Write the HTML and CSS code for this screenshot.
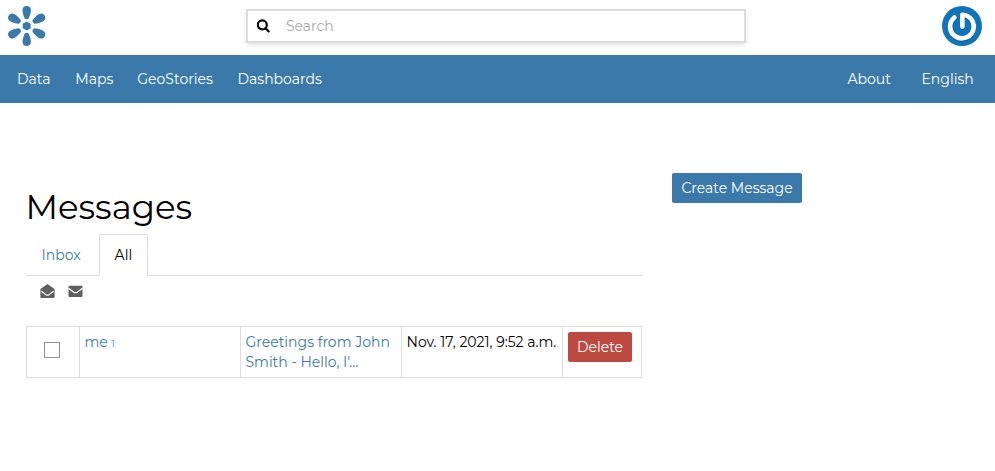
FILE: index.html
```html
<!DOCTYPE html>
<html lang="en">
<head>
<meta charset="utf-8">
<title>Messages</title>
<link rel="stylesheet" href="styles.css">
</head>
<body>
<header class="top">
  <svg class="logo" viewBox="-19.7 -20 40 40" width="40" height="40" aria-hidden="true">
    <defs><path id="petal" d="M-2-7.5C-3-9.8-4.2-13-4.2-16C-4.2-18.5-2.4-20 0-20S4.2-18.5 4.2-16C4.2-13 3-9.8 2-7.5Q0-5.9-2-7.5Z"/></defs>
    <use href="#petal"/><use href="#petal" transform="rotate(60) scale(1 1.04)"/><use href="#petal" transform="rotate(120) scale(1 1.04)"/>
    <use href="#petal" transform="rotate(180)"/><use href="#petal" transform="rotate(240) scale(1 1.04)"/><use href="#petal" transform="rotate(300) scale(1 1.04)"/>
    <path d="M0-4.4L4-2.2V2.2L0 4.4L-4 2.2V-2.2Z"/>
  </svg>
  <form class="search">
    <svg viewBox="0 0 14 14" width="14" height="14" aria-hidden="true"><circle cx="5.3" cy="5.9" r="4.5"/><path d="M8.6 9.2L11.7 12.4"/></svg>
    <input type="text" placeholder="Search" aria-label="Search">
  </form>
  <svg class="avatar" viewBox="-20 -20 40 40" width="40" height="40" aria-hidden="true">
    <circle r="20"/>
    <path class="shade" d="M.8 2V-10A11.8 11.8 0 1 1-7.1-7.7"/>
    <path d="M.4 .6V-11.3A11.8 11.8 0 1 1-7.6-8.6"/>
  </svg>
</header>
<nav class="bar">
  <a class="data">Data</a><a class="maps">Maps</a><a class="stories">GeoStories</a><a class="dash">Dashboards</a>
  <a class="about">About</a><a class="lang">English</a>
</nav>
<main class="page">
  <section class="main">
    <h1>Messages</h1>
    <div class="tabs"><a class="tab inbox">Inbox</a><a class="tab active">All</a></div>
    <div class="actions">
      <svg viewBox="0 0 15 15" width="15" height="15" aria-hidden="true"><path d="M7.5 0L14.6 5V13Q14.6 14 13.6 14H1.4Q.4 14 .4 13V5Z"/><path class="line" d="M1.4 7.3L6 10.7Q7.5 11.7 9 10.7L13.6 7.3"/></svg>
      <svg viewBox="0 0 15 15" width="15" height="15" aria-hidden="true"><path d="M1.5 1.8H13.5Q14.5 1.8 14.5 2.8V12Q14.5 13 13.5 13H1.5Q.5 13 .5 12V2.8Q.5 1.8 1.5 1.8Z"/><path class="line" d="M.5 4.3L5.8 8.2Q7.5 9.2 9.2 8.2L14.5 4.3"/></svg>
    </div>
    <table>
      <tr>
        <td class="c1"><span class="check"></span></td>
        <td class="c2"><a>me <small>1</small></a></td>
        <td class="c3"><a>Greetings from John<br>Smith - Hello, I'...</a></td>
        <td class="c4">Nov. 17, 2021, 9:52 a.m.</td>
        <td class="c5"><button class="btn danger">Delete</button></td>
      </tr>
    </table>
  </section>
  <aside><button class="btn">Create Message</button></aside>
</main>
</body>
</html>
```
FILE: styles.css
```css
* { box-sizing: border-box; }
body { margin: 0; background: #fff; color: #000; font: 400 14px/20px Montserrat, Inter, sans-serif; }
svg { display: block; flex: none; }
a { color: #3a79aa; white-space: nowrap; }
.top { height: 55px; display: flex; align-items: flex-start; padding: 6px 13px 0 7px; }
.logo { fill: #3a79aa; }
.search { margin: 3px auto 0 199px; width: 500px; height: 34px; border: 2px solid #dcdcdc; box-shadow: 0 2px 5px rgba(0,0,0,.1); display: flex; align-items: center; padding-left: 9px; }
.search svg { fill: none; stroke: #000; stroke-width: 2.2; stroke-linecap: round; }
.search input { border: 0; outline: 0; padding: 0; margin-left: 15px; width: 400px; font: inherit; background: none; }
.search input::placeholder { color: #aaa; opacity: 1; }
.avatar circle { fill: #1174b8; }
.avatar path { fill: none; stroke: #fff; stroke-width: 4.6; stroke-linecap: round; stroke-linejoin: round; }
.avatar .shade { stroke: #0b568c; opacity: .6; }
.bar { height: 48px; background: #3a79aa; display: flex; align-items: center; padding: 0 20.5px 0 17px; }
.bar a { color: #fff; }
.data { width: 58.3px; }
.maps { width: 62px; }
.stories { width: 100.2px; }
.about { margin-left: auto; width: 74px; }
.lang { width: 53px; }
.page { display: flex; padding: 70px 26px 0; gap: 30px; }
.main { width: 616px; }
h1 { margin: 14px 0 7px -.5px; font-size: 34px; line-height: 40px; font-weight: 400; }
.tabs { display: flex; height: 42px; border-bottom: 1px solid #ddd; }
.tab { height: 42px; padding: 10px 15px 10px 14.6px; border: 1px solid transparent; width: 73px; }
.tab.active { width: 49px; color: #000; background: #fff; border-color: #ddd #ddd #fff; border-radius: 2px 2px 0 0; }
.actions { display: flex; gap: 13px; padding: 8px 0 0 14px; height: 50px; }
.actions svg { fill: #606060; }
.actions .line { fill: none; stroke: #fff; stroke-width: 1.2; }
table { border-collapse: collapse; table-layout: fixed; width: 616px; height: 52px; }
td { border: 1px solid #ddd; padding: 5px 5px 5px 4.5px; vertical-align: top; white-space: nowrap; }
.c1 { width: 53px; }
.c2, .c3, .c4 { width: 161px; }
.c5 { width: 79px; padding-left: 5px; }
.check { display: block; width: 16px; height: 16px; margin: 10px 0 0 12.5px; border: 1px solid #8f8f8f; }
small { font-size: 9px; }
.btn { display: block; height: 30px; padding: 0; width: 130px; border: 0; border-radius: 2px; background: #3a79aa; color: #fff; font: inherit; white-space: nowrap; }
.danger { width: 64px; background: #bd4a41; }
```
